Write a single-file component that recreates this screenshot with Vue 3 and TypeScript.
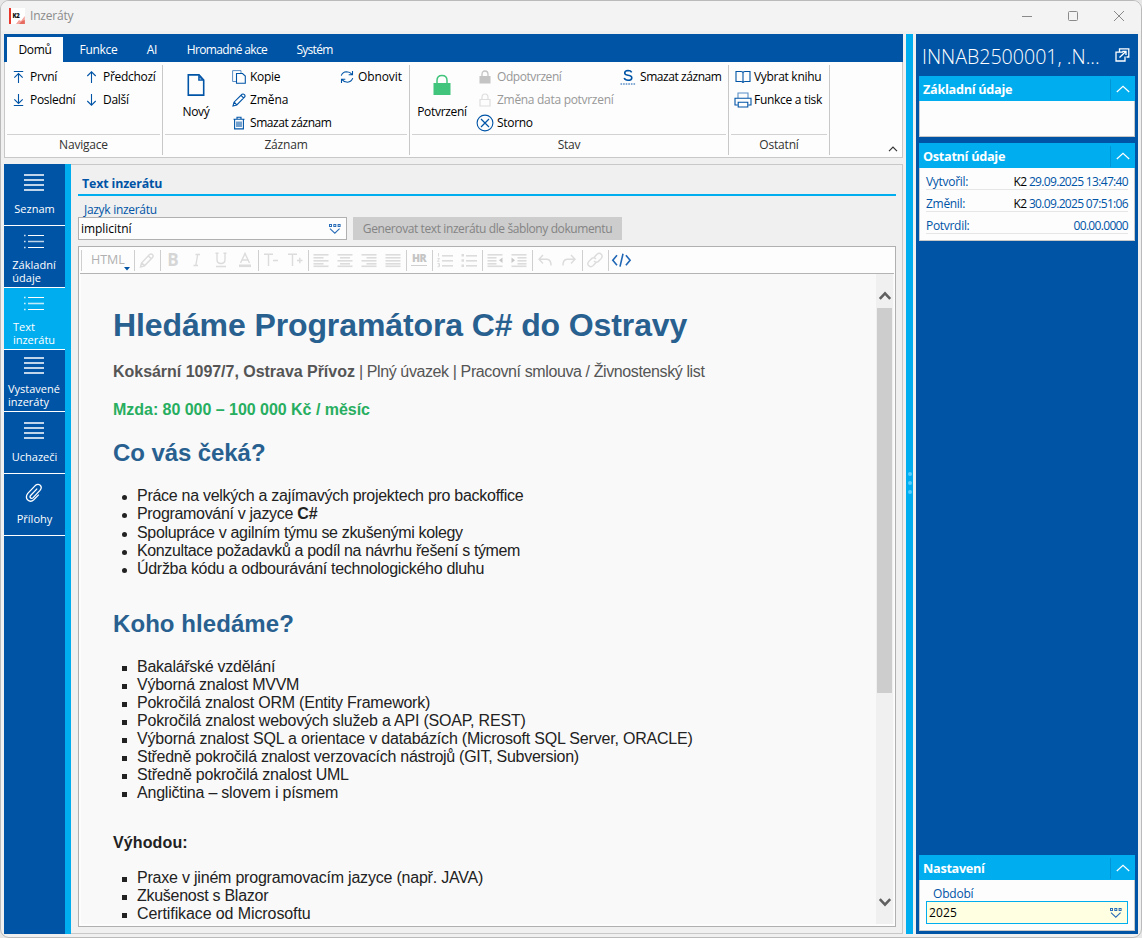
<script setup lang="ts">
interface Glyph { w: number; h: number; body: string }
interface Command { icon: string; label: string; off?: boolean; cls?: string }
interface Column { cls: string; big?: Command; items: Command[] }
interface Group { name: string; cls: string; columns: Column[] }
interface Line { text: string; strong?: string; spacing: number }

const blue = 'fill="none" stroke="#0054a6" stroke-width="1.1"'
const gray = 'fill="none" stroke="#dcdcdc" stroke-width="1.4"'
const white = 'fill="none" stroke="#fff"'

const lines = (rows: number[][], c = '#dcdcdc') =>
  rows.map(([x, y, w]) => `<rect x="${x}" y="${y}" width="${w}" height="1.6" fill="${c}"/>`).join('')

const glyphs: Record<string, Glyph> = {
  first: { w: 12, h: 14, body: `<path ${blue} d="M.8 1.5H10.2M5.5 13V3.5M1.3 7.7L5.5 3.5L9.7 7.7"/>` },
  last: { w: 12, h: 14, body: `<path ${blue} d="M.8 12.5H10.2M5.5 1V10.5M1.3 6.3L5.5 10.5L9.7 6.3"/>` },
  prev: { w: 12, h: 14, body: `<path ${blue} d="M5.5 13V2M1.3 6L5.5 1.8L9.7 6"/>` },
  next: { w: 12, h: 14, body: `<path ${blue} d="M5.5 1V12M1.3 8L5.5 12.2L9.7 8"/>` },
  page: { w: 18, h: 22, body: `<path fill="none" stroke="#0054a6" stroke-width="1.6" d="M1.3 .9H12L16.7 6V21.1H1.3Z"/><path d="M11.2 .9V6.8H17Z" fill="#0054a6"/><path d="M12.6 3.4V5.4H14.6Z" fill="#b4cde8"/>` },
  copy: { w: 14, h: 14, body: `<path ${blue} d="M4.5 3.5H10.5L13.3 6V13.3H4.5Z"/><path fill="none" stroke="#5b8fc7" d="M4 11.5H.6V.6H9V3"/>` },
  pencil: { w: 14, h: 14, body: `<path ${blue} d="M1 13L2 9.2L10 1.3Q11.3.5 12.4 1.6T12.7 4L4.8 12ZM2.2 9.2L4.8 11.8M9 2.4L11.7 5"/>` },
  trash: { w: 12, h: 14, body: `<path ${blue} d="M.5 3.2H11.5M4 3V1.2H8V3M1.6 3.5V12.9H10.4V3.5M4 5.5V11M6 5.5V11M8 5.5V11"/>` },
  refresh: { w: 14, h: 14, body: `<path ${blue} d="M1.3 5.6Q2.5 2 6.5 1.8Q10 1.8 12 4.4M12.5 1V4.8H8.7M12.7 8.2Q11.5 12 7.5 12.2Q4 12.2 2 9.6M1.5 13V9.2H5.3"/>` },
  lock: { w: 18, h: 22, body: `<rect y="9" x=".5" width="17" height="12" fill="#41c47b"/><path fill="none" stroke="#41c47b" stroke-width="1.5" d="M4 9V6.5Q4 1.5 9 1.5T14 6.5V9"/>` },
  lockGray: { w: 12, h: 14, body: `<rect y="6" x=".5" width="11" height="7.5" fill="#c4c4c4"/><path fill="none" stroke="#c4c4c4" stroke-width="1.3" d="M3 6V4.4Q3 1 6 1T9 4.4V6"/>` },
  lockOutline: { w: 12, h: 14, body: `<path fill="none" stroke="#dedede" stroke-width="1.2" d="M1 6.5H11V13H1ZM3 6V4.4Q3 1 6 1T9 4.4V6"/>` },
  cancel: { w: 18, h: 18, body: `<circle cx="9" cy="9" r="7.9" fill="none" stroke="#0054a6" stroke-width="1.1"/><path fill="none" stroke="#0054a6" stroke-width="1.2" d="M5 5L13 13M13 5L5 13"/>` },
  sDots: { w: 16, h: 16, body: `<path fill="none" stroke="#0054a6" stroke-width="1.6" d="M11.7 3.4Q10.8 1.5 8 1.5Q4.7 1.6 4.7 4Q4.7 5.7 8 6.3Q12 7 11.8 9.1Q11.5 11.3 8 11.3Q5 11.2 4.2 9"/><path stroke="#5b8fc7" stroke-width="1.5" stroke-dasharray="1.6 1" d="M.5 15H15.5"/>` },
  book: { w: 16, h: 14, body: `<path ${blue} d="M1 1.5H6Q8 1.5 8 3Q8 1.5 10 1.5H15V11.5H10Q8 11.5 8 13Q8 11.5 6 11.5H1ZM8 3V12.5"/>` },
  printer: { w: 18, h: 16, body: `<path fill="none" stroke="#5b8fc7" stroke-width="1.1" d="M4 6V1H14V6"/><path ${blue} d="M3.5 13H1V6.3H17V13H14.5M4.2 10.2H13.8V15H4.2Z"/>` },
  bars: { w: 20, h: 18, body: `<path ${white} stroke-width="1.3" d="M0 1H20M0 6H20M0 11H20M0 16H20"/>` },
  bullets: { w: 20, h: 17, body: `<path ${white} stroke-width="1.2" d="M4 1.5H20M4 13.5H20"/><path ${white} stroke-width="1.6" opacity=".75" d="M4 7.5H20"/><path ${white} stroke-width="1.4" opacity=".8" d="M0 1.5H1.6M0 7.5H1.6M0 13.5H1.6"/>` },
  clip: { w: 18, h: 20, body: `<path ${white} stroke-width="1.3" d="M12.2 5.6L5.6 12.5Q4.4 14 5.6 15T8.2 14.6L15 7.4Q17.4 4.4 15.2 2.2Q12.8.4 10.2 2.6L2.8 10.4Q.2 13.8 2.5 16.8Q5.6 19.6 8.8 16.8L13.8 11.6"/>` },
  drop: { w: 12, h: 10, body: '<path fill="#2a6db8" fill-rule="evenodd" d="M0 0h3v3h-3zM1 1v1h1v-1zM4.3 0h3v3h-3zM5.3 1v1h1v-1zM8.6 0h3v3h-3zM9.6 1v1h1v-1z"/><path fill="none" stroke="#2a6db8" stroke-width="1.1" d="M1 4.6L5.8 9.2L10.6 4.6"/>' },
  popout: { w: 15, h: 14, body: `<path ${white} stroke-width="1.3" d="M4.5 3.5V.8H13.8V9H11.5M8 4.2H1V13H10V8.5M4.5 9.5L10.5 3.8M7.3 3.4H11V7"/>` },
  chevron: { w: 14, h: 8, body: `<path ${white} stroke-width="1.2" d="M.8 7L7 1.2L13.2 7"/>` },
  edit: { w: 24, h: 22, body: `<path ${gray} d="M5.5 18L6.5 14L14.5 5.5Q16 4.3 17.4 5.6T17.5 8.5L9.5 16.8ZM6.8 14L9.5 16.6M13.3 7L16 9.6"/>` },
  italic: { w: 24, h: 22, body: `<path ${gray} stroke-width="1.2" d="M10.5 5.5H15M8.5 16.5H13M12.7 5.5L10.8 16.5"/>` },
  underline: { w: 24, h: 22, body: `<path ${gray} d="M8 4V10.5Q8 14.5 12 14.5T16 10.5V4M6.5 4.2H9.5M14.5 4.2H17.5M7 17.5H17"/>` },
  fontColor: { w: 24, h: 22, body: `<path ${gray} d="M7.5 14L12 4.5L16.5 14M9 11H15"/><rect x="6" y="15.5" width="12" height="2.6" fill="#dcdcdc"/>` },
  smaller: { w: 24, h: 22, body: `<path ${gray} d="M5 5.2H14M9.5 5.2V17M14 11.5H19"/>` },
  larger: { w: 24, h: 22, body: `<path ${gray} d="M5 5.2H14M9.5 5.2V17M14 11.5H19.5M16.8 8.8V14.2"/>` },
  left: { w: 24, h: 22, body: lines([[4.5, 5, 15], [4.5, 8, 10], [4.5, 11, 15], [4.5, 14, 10], [4.5, 16.5, 15]]) },
  center: { w: 24, h: 22, body: lines([[4.5, 5, 15], [7, 8, 10], [4.5, 11, 15], [7, 14, 10], [4.5, 16.5, 15]]) },
  right: { w: 24, h: 22, body: lines([[4.5, 5, 15], [9.5, 8, 10], [4.5, 11, 15], [9.5, 14, 10], [4.5, 16.5, 15]]) },
  justify: { w: 24, h: 22, body: lines([[4.5, 5, 15], [4.5, 8, 15], [4.5, 11, 15], [4.5, 14, 15], [4.5, 16.5, 15]]) },
  ordered: { w: 24, h: 22, body: lines([[9, 6, 11], [9, 11, 11], [9, 16, 11]]) + `<path fill="none" stroke="#dcdcdc" d="M5.5 4V7.5M4.5 9.5H6.5L4.5 12.3H6.5M4.5 14.5H6.5V17.7H4.5M5 16H6.5"/>` },
  unordered: { w: 24, h: 22, body: lines([[9, 6, 11], [9, 11, 11], [9, 16, 11]]) + '<path fill="#dcdcdc" d="M4.5 5h2.5v2.5h-2.5zM4.5 10.3h2.5v2.5h-2.5zM4.5 15.5h2.5v2.5h-2.5z"/>' },
  outdent: { w: 24, h: 22, body: lines([[4.5, 5, 15], [4.5, 8, 9], [4.5, 11, 9], [4.5, 14, 9], [4.5, 16.5, 15]]) + '<path fill="#c8c8c8" d="M19.5 8.5V14L16 11.2Z"/>' },
  indent: { w: 24, h: 22, body: lines([[4.5, 5, 15], [10.5, 8, 9], [10.5, 11, 9], [10.5, 14, 9], [4.5, 16.5, 15]]) + '<path fill="#c8c8c8" d="M4.5 8.5V14L8 11.2Z"/>' },
  undo: { w: 24, h: 22, body: `<path ${gray} d="M10 6L6 10.2L10 14.4M6.5 10.2H14Q18 10.4 18 16.5"/>` },
  redo: { w: 24, h: 22, body: `<path ${gray} d="M14 6L18 10.2L14 14.4M17.5 10.2H10Q6 10.4 6 16.5"/>` },
  link: { w: 24, h: 22, body: `<path ${gray} d="M11 8.5L14 5.2Q16.4 3.3 18.4 5.4Q20 7.4 18.3 9.4L15.2 12.6Q13 14 11 12M13 13.5L10 16.8Q7.6 18.7 5.6 16.6Q4 14.6 5.7 12.6L8.8 9.4Q11 8 13 10"/>` },
  code: { w: 24, h: 22, body: '<path fill="none" stroke="#1f66b5" stroke-width="1.6" d="M8 6.2L3.8 11.2L8 16.2M16.9 6.2L21.1 11.2L16.9 16.2M14 4.8L11 17.6"/>' },
}

const tabs = [
  { label: 'Domů', cls: 't1 active' }, { label: 'Funkce', cls: 't2' }, { label: 'AI', cls: 't3' },
  { label: 'Hromadné akce', cls: 't4' }, { label: 'Systém', cls: 't5' },
]

const groups: Group[] = [
  { name: 'Navigace', cls: 'g-nav', columns: [
    { cls: 'c-first', items: [{ icon: 'first', label: 'První' }, { icon: 'last', label: 'Poslední' }] },
    { cls: 'c-prev', items: [{ icon: 'prev', label: 'Předchozí' }, { icon: 'next', label: 'Další' }] },
  ] },
  { name: 'Záznam', cls: 'g-record', columns: [
    { cls: 'c-new', big: { icon: 'page', label: 'Nový' }, items: [] },
    { cls: 'c-edit', items: [{ icon: 'copy', label: 'Kopie' }, { icon: 'pencil', label: 'Změna', cls: 'loose' }, { icon: 'trash', label: 'Smazat záznam', cls: 'tight' }] },
    { cls: 'c-refresh', items: [{ icon: 'refresh', label: 'Obnovit', cls: 'loose' }] },
  ] },
  { name: 'Stav', cls: 'g-state', columns: [
    { cls: 'c-confirm', big: { icon: 'lock', label: 'Potvrzení' }, items: [] },
    { cls: 'c-state', items: [{ icon: 'lockGray', label: 'Odpotvrzení', off: true, cls: 'tight' }, { icon: 'lockOutline', label: 'Změna data potvrzení', off: true }, { icon: 'cancel', label: 'Storno' }] },
    { cls: 'c-del', items: [{ icon: 'sDots', label: 'Smazat záznam', cls: 'tight' }] },
  ] },
  { name: 'Ostatní', cls: 'g-other', columns: [
    { cls: 'c-other', items: [{ icon: 'book', label: 'Vybrat knihu' }, { icon: 'printer', label: 'Funkce a tisk' }] },
  ] },
]

const sections = [
  { icon: 'bars', rows: ['Seznam'] },
  { icon: 'bullets', rows: ['Základní', 'údaje'] },
  { icon: 'bullets', rows: ['Text', 'inzerátu'], active: true },
  { icon: 'bars', rows: ['Vystavené', 'inzeráty'] },
  { icon: 'bars', rows: ['Uchazeči'] },
  { icon: 'clip', rows: ['Přílohy'] },
]

const tools: string[][] = [
  ['edit'], ['B', 'italic', 'underline', 'fontColor'], ['smaller', 'larger'],
  ['left', 'center', 'right', 'justify'], ['HR'], ['ordered', 'unordered'],
  ['outdent', 'indent'], ['undo', 'redo'], ['link'], ['code'],
]

const duties: Line[] = [
  { text: 'Práce na velkých a zajímavých projektech pro backoffice', spacing: -0.28 },
  { text: 'Programování v jazyce ', strong: 'C#', spacing: -0.32 },
  { text: 'Spolupráce v agilním týmu se zkušenými kolegy', spacing: -0.33 },
  { text: 'Konzultace požadavků a podíl na návrhu řešení s týmem', spacing: -0.375 },
  { text: 'Údržba kódu a odbourávání technologického dluhu', spacing: -0.3 },
]
const skills: Line[] = [
  { text: 'Bakalářské vzdělání', spacing: -0.27 },
  { text: 'Výborná znalost MVVM', spacing: -0.25 },
  { text: 'Pokročilá znalost ORM (Entity Framework)', spacing: -0.23 },
  { text: 'Pokročilá znalost webových služeb a API (SOAP, REST)', spacing: -0.2 },
  { text: 'Výborná znalost SQL a orientace v databázích (Microsoft SQL Server, ORACLE)', spacing: -0.2 },
  { text: 'Středně pokročilá znalost verzovacích nástrojů (GIT, Subversion)', spacing: -0.28 },
  { text: 'Středně pokročilá znalost UML', spacing: -0.21 },
  { text: 'Angličtina – slovem i písmem', spacing: -0.22 },
]
const extras: Line[] = [
  { text: 'Praxe v jiném programovacím jazyce (např. JAVA)', spacing: -0.21 },
  { text: 'Zkušenost s Blazor', spacing: -0.27 },
  { text: 'Certifikace od Microsoftu', spacing: -0.1 },
]

const audit = [
  { label: 'Vytvořil:', who: 'K2', when: '29.09.2025 13:47:40' },
  { label: 'Změnil:', who: 'K2', when: '30.09.2025 07:51:06' },
  { label: 'Potvrdil:', who: '', when: '00.00.0000' },
]

const box = (n: string) => `0 0 ${glyphs[n].w} ${glyphs[n].h}`
const track = (l: Line) => ({ letterSpacing: `${l.spacing}px` })
</script>

<template>
  <div class="window">
    <header class="titlebar">
      <span class="logo">
        <svg width="16" height="16" viewBox="0 0 16 16">
          <rect width="16" height="16" fill="#fff" />
          <path d="M7 16L10 12L12 13L15.8 8V16Z" fill="#f3a49c" />
          <path d="M10 16L13 13L15.8 12V16Z" fill="#e66a60" />
          <rect width="2" height="16" fill="#e8382c" />
          <text x="3.5" y="9.6" class="logo-text">K2</text>
        </svg>
      </span>
      <span class="title">Inzeráty</span>
      <div class="controls">
        <svg width="12" height="12"><path d="M1 6.5H11" /></svg>
        <svg width="12" height="12"><rect x="1.5" y="1.5" width="9" height="9" rx="1" /></svg>
        <svg width="12" height="12"><path d="M1 1L11 11M11 1L1 11" /></svg>
      </div>
    </header>

    <div class="body">
      <div class="work">
        <section class="ribbon">
          <nav class="tabs">
            <span v-for="t in tabs" :key="t.label" class="tab" :class="t.cls">{{ t.label }}</span>
          </nav>
          <div class="groups">
            <div v-for="g in groups" :key="g.name" class="group" :class="g.cls">
              <div class="cols">
                <div v-for="c in g.columns" :key="c.cls" class="col" :class="c.cls">
                  <div v-if="c.big" class="big">
                    <svg :width="glyphs[c.big.icon].w" :height="glyphs[c.big.icon].h" :viewBox="box(c.big.icon)" v-html="glyphs[c.big.icon].body" />
                    <span>{{ c.big.label }}</span>
                  </div>
                  <div v-for="i in c.items" :key="i.label" class="cmd" :class="[{ off: i.off }, i.cls]">
                    <span class="ico"><svg :width="glyphs[i.icon].w" :height="glyphs[i.icon].h" :viewBox="box(i.icon)" v-html="glyphs[i.icon].body" /></span>
                    <span>{{ i.label }}</span>
                  </div>
                </div>
              </div>
              <div class="group-name">{{ g.name }}</div>
            </div>
            <svg class="collapse" width="10" height="6"><path d="M1 5.2L5 1.2L9 5.2" fill="none" stroke="#333" stroke-width="1.2" /></svg>
          </div>
        </section>

        <div class="lower">
          <nav class="sections">
            <div v-for="s in sections" :key="s.rows[0]" class="section" :class="{ active: s.active, two: s.rows.length > 1 }">
              <span class="sicon"><svg :width="glyphs[s.icon].w" :height="glyphs[s.icon].h" :viewBox="box(s.icon)" v-html="glyphs[s.icon].body" /></span>
              <span class="slabel"><span v-for="r in s.rows" :key="r">{{ r }}</span></span>
            </div>
          </nav>
          <main class="main">
            <h3 class="caption">Text inzerátu</h3>
            <label class="field-label">Jazyk inzerátu</label>
            <div class="field-row">
              <div class="select">
                <span>implicitní</span>
                <svg width="12" height="10" :viewBox="box('drop')" v-html="glyphs.drop.body" />
              </div>
              <div class="generate">Generovat text inzerátu dle šablony dokumentu</div>
            </div>
            <div class="editor">
              <div class="tools">
                <div class="tset html">
                  <span>HTML</span>
                  <svg width="6" height="4"><path d="M0 0H6L3 3.5Z" fill="#0054a6" /></svg>
                </div>
                <div v-for="(set, n) in tools" :key="n" class="tset">
                  <template v-for="t in set" :key="t">
                    <span v-if="t === 'B'" class="tb">B</span>
                    <span v-else-if="t === 'HR'" class="thr"><span>HR</span></span>
                    <svg v-else width="24" height="22" :viewBox="box(t)" v-html="glyphs[t].body" />
                  </template>
                </div>
              </div>
              <div class="viewport">
                <article class="doc">
                  <h1>Hledáme Programátora C# do Ostravy</h1>
                  <p class="place"><b>Koksární 1097/7, Ostrava Přívoz</b> | Plný úvazek | Pracovní smlouva / Živnostenský list</p>
                  <p class="wage">Mzda: 80 000 – 100 000 Kč / měsíc</p>
                  <h2>Co vás čeká?</h2>
                  <ul class="disc">
                    <li v-for="d in duties" :key="d.text"><i></i><span :style="track(d)">{{ d.text }}<b v-if="d.strong">{{ d.strong }}</b></span></li>
                  </ul>
                  <h2 class="second">Koho hledáme?</h2>
                  <ul class="square">
                    <li v-for="s in skills" :key="s.text"><i></i><span :style="track(s)">{{ s.text }}</span></li>
                  </ul>
                  <p class="plus">Výhodou:</p>
                  <ul class="square last">
                    <li v-for="e in extras" :key="e.text"><i></i><span :style="track(e)">{{ e.text }}</span></li>
                  </ul>
                </article>
                <div class="scroll">
                  <svg width="14" height="9"><path d="M1.8 7.8L7 2.4L12.2 7.8" /></svg>
                  <div class="thumb"></div>
                  <svg class="down" width="14" height="9"><path d="M1.8 1.2L7 6.6L12.2 1.2" /></svg>
                </div>
              </div>
            </div>
          </main>
        </div>
      </div>

      <div class="splitter"><i></i><i></i><i></i></div>

      <aside class="side">
        <div class="side-title">
          <span>INNAB2500001, .N...</span>
          <svg width="15" height="14" :viewBox="box('popout')" v-html="glyphs.popout.body" />
        </div>
        <section class="card">
          <div class="card-head"><span>Základní údaje</span><span class="fold"><svg width="14" height="8" v-html="glyphs.chevron.body" /></span></div>
          <div class="card-body blank"></div>
        </section>
        <section class="card">
          <div class="card-head"><span>Ostatní údaje</span><span class="fold"><svg width="14" height="8" v-html="glyphs.chevron.body" /></span></div>
          <div class="card-body rows">
            <div v-for="a in audit" :key="a.label" class="row">
              <span>{{ a.label }}</span>
              <span class="value"><b v-if="a.who">{{ a.who }}</b> {{ a.when }}</span>
            </div>
          </div>
        </section>
        <section class="card bottom">
          <div class="card-head"><span>Nastavení</span><span class="fold"><svg width="14" height="8" v-html="glyphs.chevron.body" /></span></div>
          <div class="card-body settings">
            <label>Období</label>
            <div class="period"><span>2025</span><svg width="12" height="10" :viewBox="box('drop')" v-html="glyphs.drop.body" /></div>
          </div>
        </section>
      </aside>
    </div>
  </div>
</template>

<style>
html, body { margin: 0; background: #e6e6e6; }
</style>

<style scoped>
* { box-sizing: border-box; }
svg { display: block; flex: none; }
.window { width: 1142px; height: 938px; border: 1px solid #bababa; border-radius: 9px; background: #f0f0f0; overflow: hidden; font: 12px/16px "Open Sans", "Noto Sans", sans-serif; letter-spacing: -0.3px; color: #000; display: flex; flex-direction: column; white-space: nowrap; }
.titlebar { height: 30px; background: #f3f3f3; display: flex; align-items: center; padding-left: 8px; flex: none; }
.logo-text { font: 800 6px "Open Sans", sans-serif; fill: #111; }
.title { margin-left: 5px; color: #8b8b8b; letter-spacing: -0.2px; }
.controls { margin-left: auto; display: flex; gap: 34px; padding-right: 16.5px; }
.controls svg { fill: none; stroke: #8a8a8a; stroke-width: 1; }
.body { display: flex; margin: 3px 3px 3px; height: 900px; }
.work { width: 899px; display: flex; flex-direction: column; }
.ribbon { height: 124px; }
.tabs { height: 28px; background: #0054a6; display: flex; align-items: flex-end; padding-left: 3px; color: #fff; }
.tab { height: 25px; line-height: 25px; text-align: center; }
.tab.active { background: #fdfdfd; color: #000; }
.t1 { width: 56px; }
.t2 { width: 71px; }
.t3 { width: 36px; }
.t4 { width: 114px; letter-spacing: -0.65px; }
.t5 { width: 61px; letter-spacing: -0.7px; }
.groups { height: 96px; background: #fdfdfd; border: 1px solid #c8c8c8; border-top: 0; display: flex; padding: 3px 0 2px 2px; }
.group { height: 90px; border-right: 1px solid #c8c8c8; padding-right: 2px; display: flex; flex-direction: column; margin-right: 2px; }
.g-nav { width: 156px; }
.g-record { width: 245px; }
.g-state { width: 317px; }
.g-other { width: 99px; }
.cols { height: 70px; border-bottom: 1px solid #d2d2d2; display: flex; }
.col { flex: none; display: flex; flex-direction: column; }
.cmd { display: flex; height: 23px; align-items: center; }
.cmd.off { color: #989898; }
.cmd.tight { letter-spacing: -0.43px; }
.cmd.loose { letter-spacing: -0.1px; }
.ico { width: 20px; display: flex; justify-content: center; flex: none; }
.big { display: flex; flex-direction: column; align-items: center; }
.group-name { text-align: center; line-height: 20px; color: #333; letter-spacing: -0.2px; }
.c-first { width: 73px; padding-left: 2px; }
.c-first .ico, .c-prev .ico { margin-right: 1px; }
.c-prev { padding-left: 2px; }
.c-new { width: 62px; }
.c-new svg { margin: 9px 0 8px; }
.c-edit { padding-left: 1px; width: 109px; }
.c-edit .ico { width: 22px; }
.c-refresh .ico { width: 22px; }
.c-confirm { width: 60px; }
.c-confirm svg { margin: 9px 0 8px; }
.c-state { padding-left: 1px; width: 144px; }
.c-state .ico { width: 24px; }
.c-del .ico { width: 24px; }
.c-other { padding-left: 1px; }
.c-other .ico { width: 22px; }
.collapse { margin: 81px 4px 0 auto; }
.lower { display: flex; margin-top: 6px; height: 770px; }
.sections { width: 67px; background: #0054a6; border-right: 6px solid #00aeef; flex: none; }
.section { height: 62px; border-bottom: 1px solid #fff; color: #fff; display: flex; flex-direction: column; align-items: center; font-size: 11px; line-height: 13px; letter-spacing: 0; }
.section.active { background: #00aeef; }
.sicon { height: 37px; display: flex; align-items: center; margin-right: 1px; }
.two .sicon { height: 32px; }
.slabel { display: flex; flex-direction: column; margin-top: 1px; }
.two .slabel { margin: 0 1px 0 0; }
.main { flex: 1; border: 1px solid #c8c8c8; border-left: 0; padding: 9px 6px 6px 7px; display: flex; flex-direction: column; }
.caption { margin: 0; height: 22px; border-bottom: 2px solid #00aeef; padding-left: 4px; font-size: 12.4px; line-height: 20px; letter-spacing: -0.15px; color: #0054a6; }
.field-label { height: 21px; padding: 6px 0 0 6px; color: #0054a6; }
.field-row { display: flex; gap: 6px; height: 23px; }
.select { width: 269px; border: 1px solid #b0b0b0; background: #fdfdfd; display: flex; justify-content: space-between; align-items: center; padding: 0 5px 0 2px; letter-spacing: -0.05px; }
.generate { width: 269px; background: #cdcdcd; color: #848484; text-align: center; line-height: 23px; letter-spacing: -0.4px; }
.editor { margin-top: 6px; height: 681px; border: 1px solid #b0b0b0; background: #fdfdfd; padding: 0 1px; }
.tools { height: 27px; border-bottom: 1px solid #b4b4b4; display: flex; padding: 3px 0 0 1px; }
.tset { display: flex; height: 21px; border-left: 1px solid #cfcfcf; padding-right: 1px; align-items: center; }
.tset > svg { margin-top: -1px; }
.html { width: 53px; padding: 0 0 0 9px; color: #b0b0b0; font-size: 12.5px; letter-spacing: 0; }
.html > span { margin-top: -1px; }
.html > svg { margin: 17px 0 0 -1px; }
.tb { width: 24px; text-align: center; font-size: 17px; line-height: 20px; font-weight: 700; color: #d6d6d6; letter-spacing: 0; margin-top: -1px; }
.thr { width: 24px; display: flex; justify-content: center; font-size: 10.5px; line-height: 10px; font-weight: 800; color: #c4c4c4; letter-spacing: -0.5px; }
.thr span { width: 16px; height: 13px; text-align: center; border-bottom: 1.5px solid #cfcfcf; margin-top: -3px; }
.viewport { display: flex; height: 650px; background: #f9f9f9; margin-left: 1px; }
.doc { width: 795px; padding-left: 32px; overflow: hidden; font-family: "Liberation Sans", Arial, sans-serif; font-size: 16px; line-height: 18px; letter-spacing: 0; color: #222; }
.doc h1 { margin: 33px 0 0; font-size: 32px; line-height: 36px; letter-spacing: -0.11px; color: #286090; }
.doc h2 { margin: 20px 0 0; font-size: 24px; line-height: 28px; letter-spacing: -0.08px; color: #286090; }
.doc h2.second { margin-top: 32px; letter-spacing: 0.07px; }
.doc p { margin: 20px 0 0; color: #555; }
.doc p.place { letter-spacing: -0.39px; }
.doc p.place b { letter-spacing: -0.03px; }
.doc p.wage { color: #27ae60; font-weight: 700; letter-spacing: -0.03px; }
.doc p.plus { margin-top: 32px; color: #222; font-weight: 700; letter-spacing: 0.12px; }
.doc ul { list-style: none; margin: 20px 0 0; padding: 0; }
.doc .disc { line-height: 18.25px; }
.doc .last { margin-top: 17px; }
.doc li { display: grid; grid-template-columns: 24px auto; align-items: center; }
.doc li b { letter-spacing: 0; }
.doc li i { width: 5px; height: 5px; background: #222; margin: 3px 0 0 9px; }
.doc .disc i { border-radius: 50%; }
.scroll { width: 17px; background: #f0f0f0; display: flex; flex-direction: column; align-items: center; padding: 17px 0; }
.scroll svg { fill: none; stroke: #606060; stroke-width: 2.6; }
.thumb { width: 15px; height: 385px; margin-top: 8px; background: #cdcdcd; }
.down { margin-top: auto; }
.splitter { width: 7px; margin: 0 3px; background: #00aeef; display: flex; flex-direction: column; align-items: center; gap: 5px; padding-top: 438px; }
.splitter i { width: 4px; height: 4px; border-radius: 50%; background: #56ccff; flex: none; }
.side { width: 222px; background: #0054a6; padding: 0 3px 3px; display: flex; flex-direction: column; }
.side-title { height: 42px; display: flex; justify-content: space-between; align-items: center; color: #fff; font-size: 19.6px; letter-spacing: 0; font-weight: 300; padding: 4px 5px 0 3px; flex: none; }
.side-title svg { margin-top: -4px; }
.card { margin-bottom: 6px; }
.card-head { height: 25px; background: #00aeef; color: #fff; font-weight: 700; font-size: 12.7px; display: flex; justify-content: space-between; align-items: center; padding: 1px 0 0 4px; }
.fold { width: 25px; height: 21px; border-left: 1px solid #0095d6; display: flex; align-items: center; justify-content: center; }
.card-body { background: #fdfdfd; border: 1px solid #c8c8c8; border-top: 0; }
.blank { height: 36px; }
.rows { height: 73px; padding: 0 6px; }
.row { height: 22px; display: flex; justify-content: space-between; align-items: center; border-bottom: 1px solid #e6e6e6; color: #0054a6; padding-top: 6px; }
.value { letter-spacing: -0.67px; }
.row b { font-weight: 400; color: #000; }
.bottom { margin: auto 0 0; }
.settings { height: 51px; padding: 5px 6px 0; }
.settings label { display: block; padding: 1px 0 0 7px; height: 16px; color: #0054a6; letter-spacing: -0.2px; }
.period { height: 23px; border: 1px solid #00aeef; background: #ffffe1; display: flex; justify-content: space-between; align-items: center; padding: 0 5px 0 2px; letter-spacing: 0.1px; }
</style>
